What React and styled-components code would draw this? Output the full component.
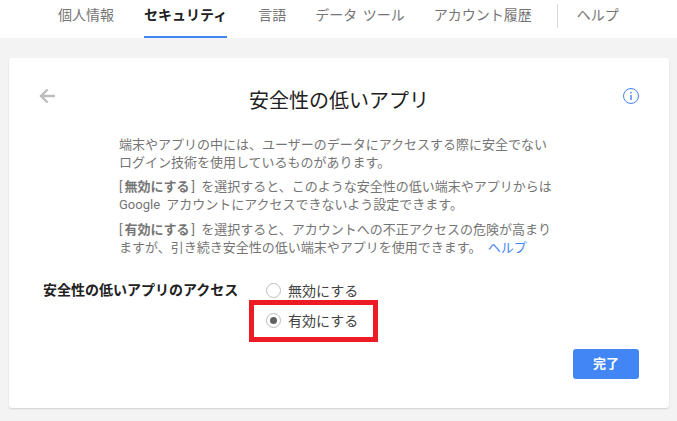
import React from 'react';
import styled, { createGlobalStyle } from 'styled-components';

const GlobalStyle = createGlobalStyle`
    html, body {
        margin: 0;
        padding: 0;
        background: #f3f3f3;
        font-family: Roboto, "Noto Sans CJK JP", sans-serif;
    }
`;

const Page = styled.div`
    width: 677px;
    height: 421px;
    overflow: hidden;
`;

const TopBar = styled.nav`
    display: flex;
    height: 38px;
    padding-left: 58px;
    background: #fff;
    box-sizing: border-box;
`;

const Tab = styled.a`
    height: 38px;
    margin-right: ${(p) => p.$gap}px;
    font-size: 14px;
    line-height: 30px;
    word-spacing: 2px;
    white-space: nowrap;
    box-sizing: border-box;
    color: ${(p) => (p.$active ? '#212121' : '#757575')};
    font-weight: ${(p) => (p.$active ? 700 : 400)};
    border-bottom: 2px solid ${(p) => (p.$active ? '#4285f4' : 'transparent')};
`;

const Divider = styled.span`
    width: 1px;
    height: 24px;
    margin: 4px 19px 0 0;
    background: #d8d8d8;
`;

const Card = styled.main`
    position: relative;
    width: 660px;
    height: 350px;
    margin: 20px 0 0 9px;
    padding-top: 28px;
    box-sizing: border-box;
    background: #fff;
    border-radius: 3px;
    box-shadow: 0 1px 2px rgba(0, 0, 0, 0.14);
`;

const TitleRow = styled.header`
    display: flex;
    align-items: flex-start;
    justify-content: space-between;
    height: 30px;
    padding: 0 29px 0 29px;
`;

const Title = styled.h1`
    margin: 0;
    font-size: 20px;
    font-weight: 400;
    line-height: 30px;
    color: #212121;
`;

const IconSlot = styled.span`
    display: block;
    width: 18px;
    height: 18px;
    margin-top: 1px;
`;

const Body = styled.section`
    width: 436px;
    margin: 20px 0 0 110px;
`;

const Para = styled.p`
    margin: 0 0 ${(p) => p.$after}px;
    font-size: 13px;
    line-height: 18px;
    word-spacing: 3px;
    color: #757575;
    b {
        margin: 0 2px;
        font-weight: 700;
    }
    a {
        color: #4285f4;
    }
`;

const AccessRow = styled.div`
    display: flex;
    margin: 18px 0 0 34px;
`;

const AccessLabel = styled.div`
    width: 223px;
    font-size: 14px;
    font-weight: 700;
    line-height: 31px;
    color: #212121;
`;

const Options = styled.div`
    display: flex;
    flex-direction: column;
`;

const Option = styled.label`
    display: flex;
    align-items: center;
    height: 30px;
    font-size: 14px;
    color: #424242;
`;

const Radio = styled.span`
    display: flex;
    align-items: center;
    justify-content: center;
    width: 15px;
    height: 15px;
    margin-right: 7px;
    box-sizing: border-box;
    border: 1px solid #bdbdbd;
    border-radius: 50%;
    &::after {
        content: '';
        display: ${(p) => (p.$checked ? 'block' : 'none')};
        width: 7px;
        height: 7px;
        border-radius: 50%;
        background: #616161;
    }
`;

const Highlight = styled.div`
    position: absolute;
    left: 240px;
    top: 242px;
    width: 129px;
    height: 42px;
    box-sizing: border-box;
    border: 5px solid #ed1c24;
`;

const DoneButton = styled.button`
    position: absolute;
    right: 30px;
    bottom: 29px;
    width: 66px;
    height: 30px;
    padding: 0 0 3px;
    border: 0;
    border-radius: 3px;
    background: #4285f4;
    color: #fff;
    font-family: inherit;
    font-size: 13px;
    font-weight: 700;
`;

function App() {
    return (
        <Page>
            <GlobalStyle />
            <TopBar>
                <Tab $gap={30}>個人情報</Tab>
                <Tab $gap={31} $active>セキュリティ</Tab>
                <Tab $gap={29}>言語</Tab>
                <Tab $gap={29}>データ ツール</Tab>
                <Tab $gap={25}>アカウント履歴</Tab>
                <Divider />
                <Tab $gap={0}>ヘルプ</Tab>
            </TopBar>
            <Card>
                <TitleRow>
                    <IconSlot>
                        <svg width="18" height="18" viewBox="0 0 18 18" fill="none" stroke="#bdbdbd" strokeWidth="2.4">
                            <path d="M17 9H3M9.5 2.5 3 9l6.5 6.5" />
                        </svg>
                    </IconSlot>
                    <Title>安全性の低いアプリ</Title>
                    <IconSlot>
                        <svg width="18" height="18" viewBox="0 0 18 18" fill="none" stroke="#4285f4" strokeWidth="1">
                            <circle cx="9" cy="9" r="7.5" />
                            <path d="M9 8v5M9 5v1.5" strokeWidth="1.4" />
                        </svg>
                    </IconSlot>
                </TitleRow>
                <Body>
                    <Para $after={6}>端末やアプリの中には、ユーザーのデータにアクセスする際に安全でないログイン技術を使用しているものがあります。</Para>
                    <Para $after={7}>[<b>無効にする</b>] を選択すると、このような安全性の低い端末やアプリからは Google アカウントにアクセスできないよう設定できます。</Para>
                    <Para $after={6}>[<b>有効にする</b>] を選択すると、アカウントへの不正アクセスの危険が高まりますが、引き続き安全性の低い端末やアプリを使用できます。 <a>ヘルプ</a></Para>
                </Body>
                <AccessRow>
                    <AccessLabel>安全性の低いアプリのアクセス</AccessLabel>
                    <Options>
                        <Option><Radio />無効にする</Option>
                        <Option><Radio $checked />有効にする</Option>
                    </Options>
                </AccessRow>
                <Highlight />
                <DoneButton>完了</DoneButton>
            </Card>
        </Page>
    );
}

export default App;
